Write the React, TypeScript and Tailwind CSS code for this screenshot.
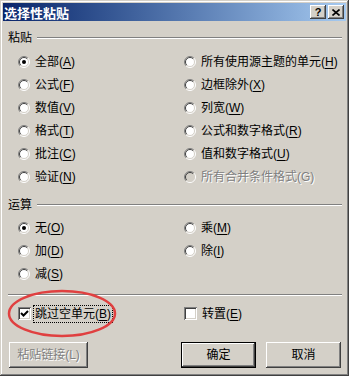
import React from 'react';

const raised =
  'shadow-[inset_-1px_-1px_#404040,inset_1px_1px_#ffffff,inset_-2px_-2px_#808080,inset_2px_2px_#d4d0c8]';

function Radio({ checked = false, disabled = false }: { checked?: boolean; disabled?: boolean }) {
  return (
    <svg width="12" height="12" viewBox="0 0 12 12" className="shrink-0">
      <circle cx="6" cy="6" r="5" fill={disabled ? '#d4d0c8' : '#ffffff'} />
      <path d="M2.1 9.9 A5.5 5.5 0 0 1 9.9 2.1" stroke="#808080" strokeWidth="1" fill="none" />
      <path d="M9.9 2.1 A5.5 5.5 0 0 1 2.1 9.9" stroke="#ffffff" strokeWidth="1" fill="none" />
      <path d="M2.8 9.2 A4.5 4.5 0 0 1 9.2 2.8" stroke="#404040" strokeWidth="1" fill="none" />
      <path d="M9.2 2.8 A4.5 4.5 0 0 1 2.8 9.2" stroke="#d4d0c8" strokeWidth="1" fill="none" />
      {checked && <circle cx="6" cy="6" r="2" fill="#000000" />}
    </svg>
  );
}

function Check({ checked = false }: { checked?: boolean }) {
  return (
    <div className="w-[13px] h-[13px] shrink-0 bg-white shadow-[inset_1px_1px_#808080,inset_-1px_-1px_#ffffff,inset_2px_2px_#404040,inset_-2px_-2px_#d4d0c8] flex items-center justify-center">
      {checked && (
        <svg width="9" height="9" viewBox="0 0 9 9">
          <polyline points="1,4 3.5,6.5 8,2" fill="none" stroke="#000000" strokeWidth="2" />
        </svg>
      )}
    </div>
  );
}

function Label({ text, k, disabled = false }: { text: string; k: string; disabled?: boolean }) {
  return (
    <span
      className={
        disabled
          ? 'text-[#808080] [text-shadow:1px_1px_0_#ffffff]'
          : 'text-black'
      }
    >
      {text}(<span className={disabled ? '' : 'underline underline-offset-2'}>{k}</span>)
    </span>
  );
}

function RadioRow({
  text,
  k,
  checked,
  disabled,
}: {
  text: string;
  k: string;
  checked?: boolean;
  disabled?: boolean;
}) {
  return (
    <div className="h-[23px] flex items-center gap-[5px]">
      <Radio checked={checked} disabled={disabled} />
      <Label text={text} k={k} disabled={disabled} />
    </div>
  );
}

function Section({ title }: { title: string }) {
  return (
    <div className="h-[16px] flex items-center">
      <span>{title}</span>
      <div className="flex-1 ml-[5px] h-[2px] border-t border-[#808080] border-b border-b-white" />
    </div>
  );
}

export default function App() {
  const paste = [
    ['全部', 'A', '所有使用源主题的单元', 'H'],
    ['公式', 'F', '边框除外', 'X'],
    ['数值', 'V', '列宽', 'W'],
    ['格式', 'T', '公式和数字格式', 'R'],
    ['批注', 'C', '值和数字格式', 'U'],
    ['验证', 'N', '所有合并条件格式', 'G'],
  ];

  return (
    <div className="w-[352px] h-[379px] bg-white font-['Liberation_Sans','Noto_Sans_CJK_SC',sans-serif] text-[12px] leading-none">
      <div className={`relative w-[349px] h-[376px] bg-[#d4d0c8] flex flex-col shadow-[inset_-1px_-1px_#404040,inset_1px_1px_#d4d0c8,inset_-2px_-2px_#808080,inset_2px_2px_#ffffff]`}>
        {/* Title bar */}
        <div className="mx-[3px] mt-[3px] h-[18px] flex items-center bg-gradient-to-r from-[#0a246a] to-[#a6caf0]">
          <span className="pl-[1px] text-white font-bold text-[13px] font-['Noto_Sans_CJK_SC',sans-serif]">选择性粘贴</span>
          <div className="ml-auto mr-[2px] flex gap-[2px]">
            <div className={`w-[16px] h-[14px] bg-[#d4d0c8] ${raised} flex items-center justify-center text-[11px] font-bold text-black`}>
              ?
            </div>
            <div className={`w-[16px] h-[14px] bg-[#d4d0c8] ${raised} flex items-center justify-center`}>
              <svg width="8" height="7" viewBox="0 0 8 7">
                <path d="M0.5 0.5 L7.5 6.5 M7.5 0.5 L0.5 6.5" stroke="#000000" strokeWidth="1.6" />
              </svg>
            </div>
          </div>
        </div>

        {/* Body */}
        <div className="pl-[8px] pr-[7px] pt-[9px] flex flex-col">
          <Section title="粘贴" />
          <div className="mt-[4px] pl-[10px] grid grid-cols-[166px_1fr]">
            {paste.map((r, i) => (
              <React.Fragment key={r[1]}>
                <RadioRow text={r[0]} k={r[1]} checked={i === 0} />
                <RadioRow text={r[2]} k={r[3]} disabled={i === 5} />
              </React.Fragment>
            ))}
          </div>

          <div className="mt-[9px]">
            <Section title="运算" />
          </div>
          <div className="mt-[3px] pl-[10px] grid grid-cols-[166px_1fr]">
            <RadioRow text="无" k="O" checked />
            <RadioRow text="乘" k="M" />
            <RadioRow text="加" k="D" />
            <RadioRow text="除" k="I" />
            <RadioRow text="减" k="S" />
          </div>

          <div className="mt-[9px] h-[2px] border-t border-[#808080] border-b border-b-white" />

          <div className="mt-[6px] pl-[10px] grid grid-cols-[166px_1fr]">
            <div className="h-[23px] flex items-center gap-[3px]">
              <Check checked />
              <span className="outline outline-1 outline-dotted outline-black px-[1px] py-[2px]">
                <Label text="跳过空单元" k="B" />
              </span>
            </div>
            <div className="h-[23px] flex items-center gap-[5px]">
              <Check />
              <Label text="转置" k="E" />
            </div>
          </div>

          <div className="mt-[17px] flex items-center">
            <div className={`ml-[1px] w-[79px] h-[26px] bg-[#d4d0c8] ${raised} flex items-center justify-center text-[#808080] [text-shadow:1px_1px_0_#ffffff]`}>
              粘贴链接(L)
            </div>
            <div className="ml-auto w-[75px] h-[26px] border border-black">
              <div className={`w-full h-full bg-[#d4d0c8] ${raised} flex items-center justify-center text-black`}>
                确定
              </div>
            </div>
            <div className={`ml-[10px] mr-[1px] w-[75px] h-[26px] bg-[#d4d0c8] ${raised} flex items-center justify-center text-black`}>
              取消
            </div>
          </div>
        </div>

        {/* Red annotation ellipse */}
        <svg className="absolute left-[7px] top-[289px]" width="110" height="49" viewBox="0 0 110 49">
          <ellipse cx="55" cy="24.5" rx="53" ry="22.5" fill="none" stroke="#e04040" strokeWidth="2.5" />
        </svg>
      </div>
    </div>
  );
}
